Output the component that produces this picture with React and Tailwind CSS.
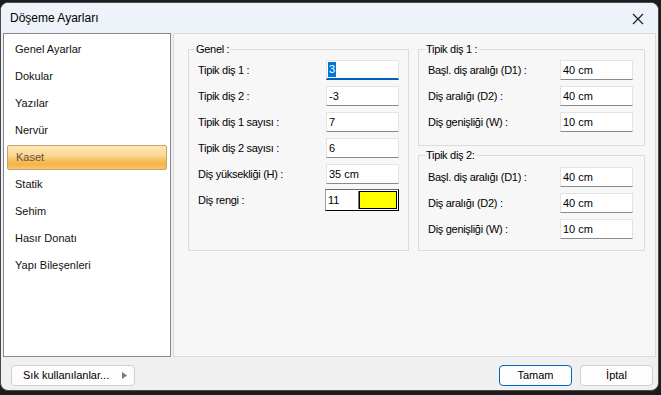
const font = { fontFamily: '"Liberation Sans", Arial, sans-serif' }

const menu = ['Genel Ayarlar', 'Dokular', 'Yazılar', 'Nervür', 'Kaset', 'Statik', 'Sehim', 'Hasır Donatı', 'Yapı Bileşenleri']

function Field({ value, focused }) {
  if (focused) {
    return (
      <div className="w-[73px] h-[20px] bg-white border border-[#e3e3e3] border-b-2 border-b-[#005fb8] flex items-center px-[1px]">
        <span className="bg-[#0078d7] text-white leading-[15px] px-[1px]">{value}</span>
      </div>
    )
  }
  return (
    <div className="w-[73px] h-[20px] bg-white border border-[#e3e3e3] border-b-[#8a8a8a] flex items-center px-[2px]">
      {value}
    </div>
  )
}

function Row({ label, children }) {
  return (
    <div className="flex items-center h-[20px]">
      <span className="flex-1 tracking-[-0.3px]">{label}</span>
      {children}
    </div>
  )
}

function Group({ title, className, children }) {
  return (
    <fieldset className={`border border-[#dcdcdc] flex flex-col gap-[6px] ${className}`}>
      <legend className="-ml-[3px] px-[1px] leading-[14px] tracking-[-0.3px]">{title}</legend>
      {children}
    </fieldset>
  )
}

export default function App() {
  return (
    <div className="w-[661px] h-[395px] bg-[#1c1c1c] pt-[2px] text-[11px] text-black" style={font}>
      <div className="w-[659px] h-[389px] rounded-[8px] overflow-hidden border border-[#4a4a4a] bg-[#f0f0f0] flex flex-col">
        <div className="h-[30px] bg-[#eef3f9] flex items-center justify-between pl-[9px] pr-[14px]">
          <span className="text-[12px]">Döşeme Ayarları</span>
          <svg width="12" height="12" viewBox="0 0 12 12" className="mt-[1px]">
            <path d="M1 1 L11 11 M11 1 L1 11" stroke="#1a1a1a" strokeWidth="1.1" />
          </svg>
        </div>

        <div className="h-[324px] flex px-[2px] gap-[2px]">
          <div className="w-[168px] bg-white border border-[#828790] pt-[3px] px-[3px] flex flex-col">
            {menu.map((m) => (
              <div
                key={m}
                className={`h-[25px] mb-[2px] flex items-center pl-[8px] ${
                  m === 'Kaset'
                    ? 'rounded-[2px] border border-[#c9a46a] bg-[linear-gradient(to_bottom,#fde6b4_0%,#fcd996_40%,#f8c262_60%,#f5b347_80%,#f8c66e_100%)] text-[#5e5248]'
                    : 'text-[#111]'
                }`}
              >
                {m}
              </div>
            ))}
          </div>

          <div className="flex-1 border border-[#dadada] bg-[#f7f7f7] pt-[8px] pl-[14px] flex gap-[9px] items-start">
            <Group title="Genel :" className="w-[221px] h-[209px] pt-[4px] pl-[9px] pr-[9px]">
              <Row label="Tipik diş 1 :"><Field value="3" focused /></Row>
              <Row label="Tipik diş 2 :"><Field value="-3" /></Row>
              <Row label="Tipik diş 1 sayısı :"><Field value="7" /></Row>
              <Row label="Tipik diş 2 sayısı :"><Field value="6" /></Row>
              <Row label="Diş yüksekliği (H) :"><Field value="35 cm" /></Row>
              <Row label="Diş rengi :">
                <div className="w-[74px] h-[22px] border border-black border-l-[#a0a0a0] border-t-[#6a6a6a] flex p-[1px] bg-white">
                  <div className="w-[32px] flex items-center pl-[1px] border-r border-[#7a7a7a]">11</div>
                  <div className="flex-1 bg-[#ffff00] border border-black"></div>
                </div>
              </Row>
            </Group>

            <div className="flex flex-col gap-[2px]">
              <Group title="Tipik diş 1 :" className="w-[227px] h-[104px] pt-[4px] pl-[9px] pr-[11px]">
                <Row label="Başl. diş aralığı (D1) :"><Field value="40 cm" /></Row>
                <Row label="Diş aralığı (D2) :"><Field value="40 cm" /></Row>
                <Row label="Diş genişliği (W) :"><Field value="10 cm" /></Row>
              </Group>
              <Group title="Tipik diş 2:" className="w-[227px] h-[103px] pt-[5px] pl-[9px] pr-[11px]">
                <Row label="Başl. diş aralığı (D1) :"><Field value="40 cm" /></Row>
                <Row label="Diş aralığı (D2) :"><Field value="40 cm" /></Row>
                <Row label="Diş genişliği (W) :"><Field value="10 cm" /></Row>
              </Group>
            </div>
          </div>
        </div>

        <div className="flex-1 flex items-start pt-[8px] pl-[10px] pr-[5px]">
          <button className="w-[124px] h-[21px] rounded-[4px] border border-[#d0d0d0] bg-[#fdfdfd] flex items-center justify-between pl-[11px] pr-[7px]">
            <span>Sık kullanılanlar...</span>
            <svg width="5" height="7" viewBox="0 0 5 7"><path d="M0 0 L5 3.5 L0 7 Z" fill="#7a7a7a" /></svg>
          </button>
          <div className="flex-1"></div>
          <button className="w-[73px] h-[21px] rounded-[4px] border-[1.5px] border-[#0067c0] bg-[#fdfdfd] flex items-center justify-center">
            Tamam
          </button>
          <button className="ml-[8px] w-[73px] h-[21px] rounded-[4px] border border-[#d0d0d0] bg-[#fdfdfd] flex items-center justify-center">
            İptal
          </button>
        </div>
      </div>
    </div>
  )
}
